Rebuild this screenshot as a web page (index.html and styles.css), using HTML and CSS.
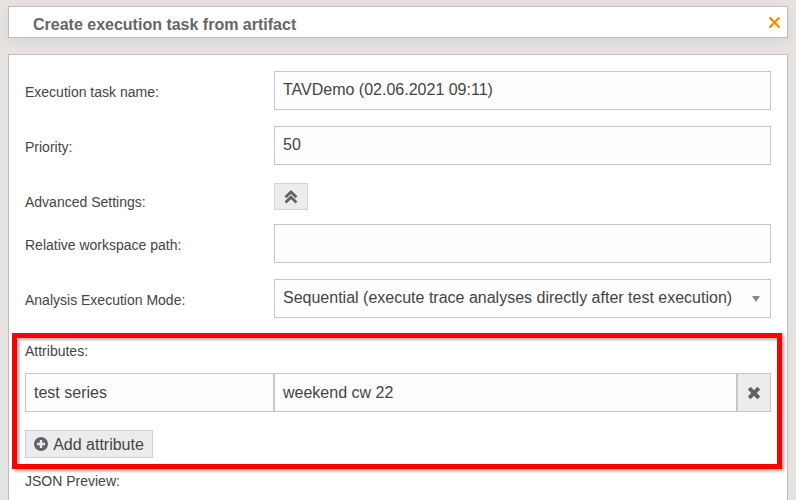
FILE: index.html
```html
<!DOCTYPE html>
<html lang="en">
<head>
<meta charset="utf-8">
<title>Create execution task from artifact</title>
<link rel="stylesheet" href="styles.css">
</head>
<body>
<header class="title-bar">
  <h1 class="title">Create execution task from artifact</h1>
  <svg class="close" width="13" height="13" viewBox="0 0 13 13" aria-hidden="true"><path d="M1.5 1.5 11.5 11.5M11.5 1.5 1.5 11.5" stroke="#f29100" stroke-width="2.4" fill="none"/></svg>
</header>
<main class="panel">
  <div class="row row-name">
    <label class="label">Execution task name:</label>
    <div class="field">TAVDemo (02.06.2021 09:11)</div>
  </div>
  <div class="row row-priority">
    <label class="label">Priority:</label>
    <div class="field">50</div>
  </div>
  <div class="row row-advanced">
    <label class="label">Advanced Settings:</label>
    <button class="toggle" type="button">
      <svg width="16" height="16" viewBox="0 0 16 16" aria-hidden="true"><path d="M2.5 8.2 8 3 13.5 8.2M2.5 13.4 8 8.2 13.5 13.4" stroke="#5f6368" stroke-width="2.8" fill="none"/></svg>
    </button>
  </div>
  <div class="row row-path">
    <label class="label">Relative workspace path:</label>
    <div class="field"></div>
  </div>
  <div class="row row-mode">
    <label class="label">Analysis Execution Mode:</label>
    <div class="field select">
      <span>Sequential (execute trace analyses directly after test execution)</span>
      <span class="caret"></span>
    </div>
  </div>
  <section class="attributes">
    <div class="attr-label">Attributes:</div>
    <div class="attr-row">
      <div class="field attr-key">test series</div>
      <div class="field attr-value">weekend cw 22</div>
      <button class="attr-remove" type="button">
        <svg width="14" height="14" viewBox="0 0 14 14" aria-hidden="true"><path d="M2.2 2.2 11.8 11.8M11.8 2.2 2.2 11.8" stroke="#5f6368" stroke-width="4" fill="none"/></svg>
      </button>
    </div>
    <button class="add" type="button">
      <svg width="14" height="14" viewBox="0 0 14 14" aria-hidden="true"><circle cx="7" cy="7" r="7" fill="#5f6368"/><path d="M7 3v8M3 7h8" stroke="#ececec" stroke-width="2.4"/></svg>
      <span class="add-text">Add attribute</span>
    </button>
  </section>
  <div class="json-label">JSON Preview:</div>
</main>
</body>
</html>
```
FILE: styles.css
```css
html, body {
  height: 100%;
  overflow: hidden;
}
body {
  margin: 0;
  padding: 6px 8px 0 8px;
  box-sizing: border-box;
  background: #e5e2e0;
  font-family: "Liberation Sans", Arial, sans-serif;
  color: #333;
}
.title-bar {
  display: flex;
  align-items: center;
  justify-content: space-between;
  height: 32px;
  box-sizing: border-box;
  padding: 0 6px 0 24px;
  background: #fff;
  border: 1px solid #bfbfbf;
  box-shadow: 0 3px 12px rgba(0, 0, 0, 0.06);
}
.title {
  margin: 0;
  padding-top: 5px;
  font-size: 16px;
  font-weight: 700;
  color: #666;
}
.close { display: block; }
.panel {
  margin-top: 16px;
  height: 460px;
  box-sizing: border-box;
  padding: 16px 15px 0 16px;
  background: #fff;
  border: 1px solid #bfbfbf;
  border-bottom: 0;
}
.row {
  display: grid;
  grid-template-columns: 249px 497px;
  align-items: center;
}
.label {
  font-size: 14px;
  color: #444;
  padding-top: 3px;
}
.field {
  height: 39px;
  box-sizing: border-box;
  display: flex;
  align-items: center;
  padding: 0 8px 2px;
  background: #fefefe;
  border: 1px solid #c6c6c6;
  font-size: 16px;
  color: #444;
}
.row-priority { margin-top: 16px; }
.row-advanced { margin-top: 18px; height: 27px; }
.row-advanced .label { padding-top: 10px; }
.row-path { margin-top: 14px; }
.row-mode { margin-top: 16px; }
.toggle {
  width: 34px;
  height: 27px;
  padding: 0;
  display: flex;
  align-items: center;
  justify-content: center;
  background: #ececec;
  border: 1px solid #d4d4d4;
}
.select {
  justify-content: space-between;
  padding-right: 10px;
}
.caret {
  width: 0;
  height: 0;
  margin-top: 2px;
  border-left: 4px solid transparent;
  border-right: 4px solid transparent;
  border-top: 6px solid #888;
}
.attributes {
  margin: 15px -10px 0 -13px;
  height: 136px;
  box-sizing: border-box;
  padding: 5px 5px 0 8px;
  border: 5px solid #ff0000;
  box-shadow: 2px 2px 3px rgba(0, 0, 0, 0.35), inset 2px 2px 3px rgba(0, 0, 0, 0.3);
}
.attr-label {
  font-size: 14px;
  color: #444;
  line-height: 16px;
}
.attr-row {
  display: flex;
  margin-top: 14px;
}
.attr-row .field { padding-bottom: 0; }
.attr-key {
  width: 250px;
  border-right-width: 2px;
}
.attr-value {
  width: 463px;
  margin-left: -1px;
  border-left-width: 1px;
}
.attr-remove {
  width: 35px;
  height: 39px;
  padding: 0;
  display: flex;
  align-items: center;
  justify-content: center;
  background: #ececec;
  border: 1px solid #c6c6c6;
  border-left-width: 2px;
  margin-left: -1px;
}
.add {
  margin-top: 18px;
  height: 28px;
  width: 128px;
  padding: 0;
  display: flex;
  align-items: center;
  justify-content: center;
  gap: 5px;
  background: #ececec;
  border: 1px solid #d0d0d0;
  font-family: inherit;
  font-size: 16px;
  color: #444;
}
.add-text { padding-top: 1px; }
.json-label {
  margin-top: 4px;
  font-size: 14px;
  color: #444;
}
```
